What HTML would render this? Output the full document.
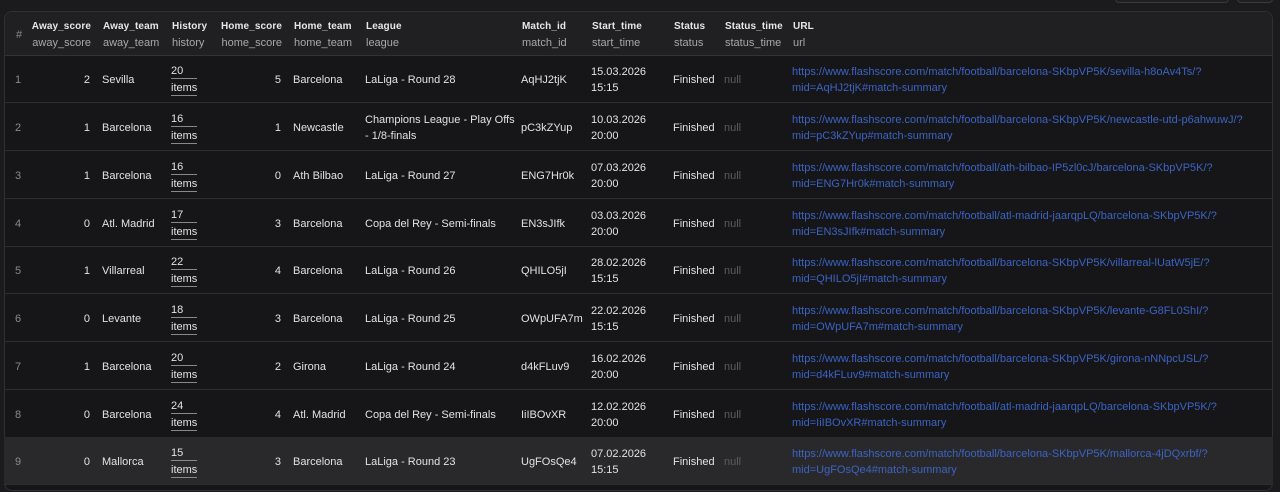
<!DOCTYPE html>
<html><head><meta charset="utf-8"><style>
*{margin:0;padding:0;box-sizing:border-box}
body{width:1280px;height:485px;background:#1b1b1d;font-family:"Liberation Sans",sans-serif;font-size:11px;color:#e2e2e2;position:relative;overflow:hidden}
.btn{position:absolute;top:-10px;height:13px;border:1px solid #3a3a3c;border-radius:4px;background:#1f1f21}
.wrap{position:absolute;left:4px;top:11px;width:1269px;height:480px;border:1px solid #303033;border-radius:8px;background:#161618;overflow:hidden}
.hd{position:absolute;left:0;top:0;width:100%;height:44px;background:#202022;border-bottom:1px solid #333336}
.hd .c{padding-top:3px}
.row{position:absolute;left:0;width:100%;height:48px;border-bottom:1px solid #2e2e31}
.row.hl{background:#29292b}
.c{position:absolute;top:0;height:100%;display:flex;flex-direction:column;justify-content:center;line-height:16px;white-space:nowrap}
.row .c{top:1px}
.r{align-items:flex-end}
.hd b{font-weight:bold;color:#e6e6e6;font-size:10px;letter-spacing:0.1px}
.hd i{font-style:normal;color:#a8a8a8}
.n{color:#8a8a8a}
.nul{color:#5d5d60}
.u{color:#3c63c4}
.it span{border-bottom:1px solid #888;line-height:14px;display:inline-block}
.it span+span{margin-top:2px}
</style></head><body>
<div class="btn" style="left:1115px;width:114px"></div>
<div class="btn" style="left:1237px;width:36px"></div>
<div class="wrap">
<div class="hd">
<div class="c n" style="left:11px">#</div>
<div class="c r" style="left:20px;width:66px"><b>Away_score</b><i>away_score</i></div>
<div class="c" style="left:98px"><b>Away_team</b><i>away_team</i></div>
<div class="c" style="left:167px"><b>History</b><i>history</i></div>
<div class="c r" style="left:200px;width:77px"><b>Home_score</b><i>home_score</i></div>
<div class="c" style="left:289px"><b>Home_team</b><i>home_team</i></div>
<div class="c" style="left:361px"><b>League</b><i>league</i></div>
<div class="c" style="left:517px"><b>Match_id</b><i>match_id</i></div>
<div class="c" style="left:587px"><b>Start_time</b><i>start_time</i></div>
<div class="c" style="left:669px"><b>Status</b><i>status</i></div>
<div class="c" style="left:720px"><b>Status_time</b><i>status_time</i></div>
<div class="c" style="left:788px"><b>URL</b><i>url</i></div>
</div>
</div>
<div style="position:absolute;left:4px;top:12px;width:1269px;height:480px;pointer-events:none">
<div class="row" style="top:43px"><div class="c n" style="left:11px">1</div><div class="c r" style="left:20px;width:66px">2</div><div class="c" style="left:98px">Sevilla</div><div class="c it" style="left:167px"><span>20</span><span>items</span></div><div class="c r" style="left:200px;width:77px">5</div><div class="c" style="left:289px">Barcelona</div><div class="c" style="left:361px">LaLiga - Round 28</div><div class="c" style="left:517px">AqHJ2tjK</div><div class="c" style="left:587px"><span>15.03.2026</span><span>15:15</span></div><div class="c" style="left:669px">Finished</div><div class="c nul" style="left:720px">null</div><div class="c u" style="left:788px"><span>https://www.flashscore.com/match/football/barcelona-SKbpVP5K/sevilla-h8oAv4Ts/?</span><span>mid=AqHJ2tjK#match-summary</span></div></div>
<div class="row" style="top:91px"><div class="c n" style="left:11px">2</div><div class="c r" style="left:20px;width:66px">1</div><div class="c" style="left:98px">Barcelona</div><div class="c it" style="left:167px"><span>16</span><span>items</span></div><div class="c r" style="left:200px;width:77px">1</div><div class="c" style="left:289px">Newcastle</div><div class="c" style="left:361px"><span>Champions League - Play Offs</span><span>- 1/8-finals</span></div><div class="c" style="left:517px">pC3kZYup</div><div class="c" style="left:587px"><span>10.03.2026</span><span>20:00</span></div><div class="c" style="left:669px">Finished</div><div class="c nul" style="left:720px">null</div><div class="c u" style="left:788px"><span>https://www.flashscore.com/match/football/barcelona-SKbpVP5K/newcastle-utd-p6ahwuwJ/?</span><span>mid=pC3kZYup#match-summary</span></div></div>
<div class="row" style="top:139px"><div class="c n" style="left:11px">3</div><div class="c r" style="left:20px;width:66px">1</div><div class="c" style="left:98px">Barcelona</div><div class="c it" style="left:167px"><span>16</span><span>items</span></div><div class="c r" style="left:200px;width:77px">0</div><div class="c" style="left:289px">Ath Bilbao</div><div class="c" style="left:361px">LaLiga - Round 27</div><div class="c" style="left:517px">ENG7Hr0k</div><div class="c" style="left:587px"><span>07.03.2026</span><span>20:00</span></div><div class="c" style="left:669px">Finished</div><div class="c nul" style="left:720px">null</div><div class="c u" style="left:788px"><span>https://www.flashscore.com/match/football/ath-bilbao-IP5zl0cJ/barcelona-SKbpVP5K/?</span><span>mid=ENG7Hr0k#match-summary</span></div></div>
<div class="row" style="top:187px"><div class="c n" style="left:11px">4</div><div class="c r" style="left:20px;width:66px">0</div><div class="c" style="left:98px">Atl. Madrid</div><div class="c it" style="left:167px"><span>17</span><span>items</span></div><div class="c r" style="left:200px;width:77px">3</div><div class="c" style="left:289px">Barcelona</div><div class="c" style="left:361px">Copa del Rey - Semi-finals</div><div class="c" style="left:517px">EN3sJIfk</div><div class="c" style="left:587px"><span>03.03.2026</span><span>20:00</span></div><div class="c" style="left:669px">Finished</div><div class="c nul" style="left:720px">null</div><div class="c u" style="left:788px"><span>https://www.flashscore.com/match/football/atl-madrid-jaarqpLQ/barcelona-SKbpVP5K/?</span><span>mid=EN3sJIfk#match-summary</span></div></div>
<div class="row" style="top:234px"><div class="c n" style="left:11px">5</div><div class="c r" style="left:20px;width:66px">1</div><div class="c" style="left:98px">Villarreal</div><div class="c it" style="left:167px"><span>22</span><span>items</span></div><div class="c r" style="left:200px;width:77px">4</div><div class="c" style="left:289px">Barcelona</div><div class="c" style="left:361px">LaLiga - Round 26</div><div class="c" style="left:517px">QHILO5jI</div><div class="c" style="left:587px"><span>28.02.2026</span><span>15:15</span></div><div class="c" style="left:669px">Finished</div><div class="c nul" style="left:720px">null</div><div class="c u" style="left:788px"><span>https://www.flashscore.com/match/football/barcelona-SKbpVP5K/villarreal-lUatW5jE/?</span><span>mid=QHILO5jI#match-summary</span></div></div>
<div class="row" style="top:282px"><div class="c n" style="left:11px">6</div><div class="c r" style="left:20px;width:66px">0</div><div class="c" style="left:98px">Levante</div><div class="c it" style="left:167px"><span>18</span><span>items</span></div><div class="c r" style="left:200px;width:77px">3</div><div class="c" style="left:289px">Barcelona</div><div class="c" style="left:361px">LaLiga - Round 25</div><div class="c" style="left:517px">OWpUFA7m</div><div class="c" style="left:587px"><span>22.02.2026</span><span>15:15</span></div><div class="c" style="left:669px">Finished</div><div class="c nul" style="left:720px">null</div><div class="c u" style="left:788px"><span>https://www.flashscore.com/match/football/barcelona-SKbpVP5K/levante-G8FL0ShI/?</span><span>mid=OWpUFA7m#match-summary</span></div></div>
<div class="row" style="top:330px"><div class="c n" style="left:11px">7</div><div class="c r" style="left:20px;width:66px">1</div><div class="c" style="left:98px">Barcelona</div><div class="c it" style="left:167px"><span>20</span><span>items</span></div><div class="c r" style="left:200px;width:77px">2</div><div class="c" style="left:289px">Girona</div><div class="c" style="left:361px">LaLiga - Round 24</div><div class="c" style="left:517px">d4kFLuv9</div><div class="c" style="left:587px"><span>16.02.2026</span><span>20:00</span></div><div class="c" style="left:669px">Finished</div><div class="c nul" style="left:720px">null</div><div class="c u" style="left:788px"><span>https://www.flashscore.com/match/football/barcelona-SKbpVP5K/girona-nNNpcUSL/?</span><span>mid=d4kFLuv9#match-summary</span></div></div>
<div class="row" style="top:378px"><div class="c n" style="left:11px">8</div><div class="c r" style="left:20px;width:66px">0</div><div class="c" style="left:98px">Barcelona</div><div class="c it" style="left:167px"><span>24</span><span>items</span></div><div class="c r" style="left:200px;width:77px">4</div><div class="c" style="left:289px">Atl. Madrid</div><div class="c" style="left:361px">Copa del Rey - Semi-finals</div><div class="c" style="left:517px">IiIBOvXR</div><div class="c" style="left:587px"><span>12.02.2026</span><span>20:00</span></div><div class="c" style="left:669px">Finished</div><div class="c nul" style="left:720px">null</div><div class="c u" style="left:788px"><span>https://www.flashscore.com/match/football/atl-madrid-jaarqpLQ/barcelona-SKbpVP5K/?</span><span>mid=IiIBOvXR#match-summary</span></div></div>
<div class="row hl" style="top:425px"><div class="c n" style="left:11px">9</div><div class="c r" style="left:20px;width:66px">0</div><div class="c" style="left:98px">Mallorca</div><div class="c it" style="left:167px"><span>15</span><span>items</span></div><div class="c r" style="left:200px;width:77px">3</div><div class="c" style="left:289px">Barcelona</div><div class="c" style="left:361px">LaLiga - Round 23</div><div class="c" style="left:517px">UgFOsQe4</div><div class="c" style="left:587px"><span>07.02.2026</span><span>15:15</span></div><div class="c" style="left:669px">Finished</div><div class="c nul" style="left:720px">null</div><div class="c u" style="left:788px"><span>https://www.flashscore.com/match/football/barcelona-SKbpVP5K/mallorca-4jDQxrbf/?</span><span>mid=UgFOsQe4#match-summary</span></div></div>
</div>
</body></html>
